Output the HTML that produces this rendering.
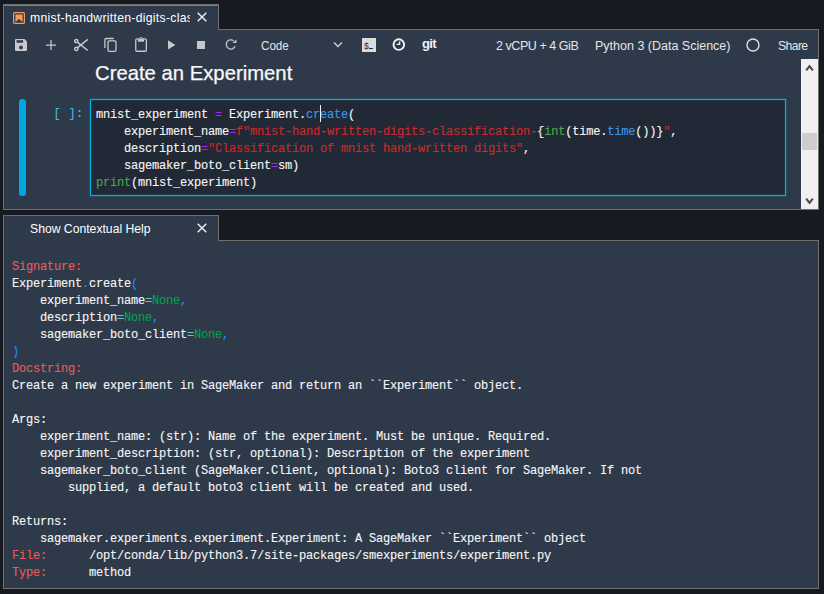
<!DOCTYPE html>
<html><head><meta charset="utf-8">
<style>
*{margin:0;padding:0;box-sizing:border-box}
html,body{width:824px;height:594px;overflow:hidden;background:#171a21}
body{position:relative;font-family:"Liberation Sans",sans-serif;color:#e8e8e8}
.abs{position:absolute}
.panelbg{background:#2e3949}
.bd{border:1px solid #6e6e6c}
.tab{position:absolute;background:#2e3949;border:1px solid #6e6e6c;border-bottom:none}
.tablabel{position:absolute;font-size:12.2px;white-space:nowrap;overflow:hidden;color:#ffffff}
.x{position:absolute;width:10px;height:10px}
.mono{font-family:"Liberation Mono",monospace;font-size:12px;letter-spacing:-0.2px;white-space:pre;line-height:17px;-webkit-text-stroke:0.12px currentColor}
.ui{font-size:12.2px;color:#e6e6e6;white-space:nowrap}
.op{color:#aa22ff}.str{color:#cc2a2a}.prop{color:#3f96ea}.kw{color:#4aa64a}
.ar{color:#e75c58}.ab{color:#208ffb}.ag{color:#00a250}.ac{color:#60c6c8}
</style></head><body>

<!-- Panel 1 -->
<div class="abs panelbg bd" style="left:3px;top:29px;width:816px;height:181px"></div>
<!-- Tab 1 -->
<div class="tab" style="left:3px;top:4px;width:216px;height:26px">
  <div class="abs" style="left:0;top:0;width:214px;height:1px;background:#00a8e1"></div>
</div>
<!-- tab icon -->
<svg class="abs" style="left:13px;top:12px" width="12" height="12" viewBox="0 0 12 12">
  <rect x="0.6" y="0.6" width="10.8" height="10.8" rx="1" fill="none" stroke="#f39c5a" stroke-width="1.2"/>
  <path d="M2.4 2.4h7.2v7.6L6 6.9L2.4 10z" fill="#f39c5a"/>
</svg>
<div class="tablabel" style="left:30px;top:9px;width:160px;height:18px;line-height:18px;letter-spacing:0.3px">mnist-handwritten-digits-classification.ipynb</div>
<svg class="x" style="left:197px;top:12px" viewBox="0 0 10 10"><path d="M0.7 0.7L9.3 9.3M9.3 0.7L0.7 9.3" stroke="#f0f0f0" stroke-width="1.4"/></svg>

<!-- Toolbar -->
<!-- save -->
<svg class="abs" style="left:15px;top:39px" width="12" height="12" viewBox="0 0 12 12">
  <path d="M0 1a1 1 0 0 1 1-1h8.5L12 2.5V11a1 1 0 0 1-1 1H1a1 1 0 0 1-1-1z" fill="#c8c8c8"/>
  <rect x="1.5" y="1.2" width="6.6" height="2.5" fill="#2e3949"/>
  <circle cx="6" cy="8.4" r="1.9" fill="#2e3949"/>
</svg>
<!-- plus -->
<svg class="abs" style="left:46px;top:40px" width="10" height="10" viewBox="0 0 10 10"><path d="M5 0v10M0 5h10" stroke="#c8c8c8" stroke-width="1.25"/></svg>
<!-- cut -->
<svg class="abs" style="left:74px;top:38px" width="15" height="14" viewBox="0 0 15 14">
  <circle cx="2.3" cy="3" r="1.6" fill="none" stroke="#c8c8c8" stroke-width="1.5"/>
  <circle cx="2.3" cy="10.9" r="1.6" fill="none" stroke="#c8c8c8" stroke-width="1.5"/>
  <path d="M3.6 4.3L13.8 12.5M3.6 9.6L13.8 1.4" stroke="#c8c8c8" stroke-width="1.5"/>
</svg>
<!-- copy+paste -->
<svg class="abs" style="left:100px;top:34px" width="50" height="22" viewBox="0 0 50 22">
  <path d="M4.9 14V5.7Q4.9 4.5 6.1 4.5H13.7" fill="none" stroke="#c8c8c8" stroke-width="1.3"/>
  <rect x="8" y="6.9" width="8" height="10.4" rx="1.2" fill="none" stroke="#c8c8c8" stroke-width="1.3"/>
  <rect x="35.75" y="4.9" width="10.6" height="12.35" rx="1.3" fill="none" stroke="#c8c8c8" stroke-width="1.3"/>
  <path d="M38 5.2h6v2.5h-6z" fill="#c8c8c8"/>
  <circle cx="41" cy="4.6" r="1.6" fill="#c8c8c8"/>
  <circle cx="41" cy="4.4" r="0.55" fill="#2e3949"/>
</svg>
<!-- run -->
<svg class="abs" style="left:168px;top:40px" width="8" height="10" viewBox="0 0 8 10"><path d="M0 0.2L7.4 4.9L0 9.6z" fill="#c8c8c8"/></svg>
<!-- stop -->
<div class="abs" style="left:197px;top:41px;width:8px;height:8px;background:#c8c8c8"></div>
<!-- restart -->
<svg class="abs" style="left:225px;top:38px" width="13" height="13" viewBox="0 0 13 13">
  <path d="M10.07 8.34A4.6 4.6 0 1 1 8.6 2.7" fill="none" stroke="#c8c8c8" stroke-width="1.3"/>
  <path d="M7.4 5.1L11.5 1.6L11.5 5.1z" fill="#c8c8c8"/>
</svg>
<div class="abs ui" style="left:261px;top:37.5px;font-size:13.5px;transform:scaleX(0.86);transform-origin:0 0">Code</div>
<svg class="abs" style="left:333px;top:41px" width="10" height="7" viewBox="0 0 10 7"><path d="M1 1.5L5 5.5L9 1.5" fill="none" stroke="#d0d0d0" stroke-width="1.4"/></svg>
<!-- terminal -->
<div class="abs" style="left:362px;top:38px;width:14px;height:14px;background:#dcdcdc"></div>
<div class="abs" style="left:364px;top:40.5px;font-size:8.5px;color:#2a2a2a;font-family:'Liberation Sans',sans-serif;line-height:10px">$</div>
<div class="abs" style="left:369px;top:48px;width:4px;height:1px;background:#2a2a2a"></div>
<!-- clock -->
<svg class="abs" style="left:392px;top:37.5px" width="14" height="14" viewBox="0 0 14 14">
  <circle cx="6.8" cy="6.6" r="5.3" fill="none" stroke="#f4f4f4" stroke-width="1.9"/>
  <path d="M7.6 3.4V6.4H4.6" fill="none" stroke="#f4f4f4" stroke-width="1.4"/>
</svg>
<div class="abs" style="left:422px;top:35.5px;font-size:13px;font-weight:bold;color:#f4f4f4;letter-spacing:-0.6px">git</div>
<div class="abs ui" style="left:496px;top:39px;font-size:12.5px;letter-spacing:-0.45px">2 vCPU + 4 GiB</div>
<div class="abs ui" style="left:595px;top:39px;font-size:12.5px">Python 3 (Data Science)</div>
<svg class="abs" style="left:746px;top:38px" width="14" height="14" viewBox="0 0 14 14"><circle cx="7" cy="7" r="6" fill="none" stroke="#e0e0e0" stroke-width="1.4"/></svg>
<div class="abs ui" style="left:778px;top:39px;font-size:12.2px;letter-spacing:-0.6px">Share</div>

<!-- notebook content -->
<div class="abs ui" style="left:95px;top:62px;font-size:20.3px;color:#f8f8f8;-webkit-text-stroke:0.25px #f8f8f8">Create an Experiment</div>
<div class="abs" style="left:19px;top:99px;width:7px;height:97px;background:#00a8e1;border-radius:3px"></div>
<div class="abs mono" style="left:53.5px;top:106px;color:#3bbde0;letter-spacing:0.3px">[ ]:</div>
<div class="abs" style="left:90px;top:99px;width:696px;height:97px;border:1px solid #00aee8;background:#202935;box-shadow:0 0 2px rgba(0,174,232,0.55),inset 0 0 2px rgba(0,174,232,0.45)"></div>
<div class="abs mono" style="left:96px;top:107px;color:#f6f6f6">mnist_experiment <span class="op">=</span> Experiment.<span class="prop">create</span>(
    experiment_name<span class="op">=</span><span class="str">f"mnist-hand-written-digits-classification-</span>{<span class="kw">int</span>(time.<span class="prop">time</span>())}<span class="str">"</span>,
    description<span class="op">=</span><span class="str">"Classification of mnist hand-written digits"</span>,
    sagemaker_boto_client<span class="op">=</span>sm)
<span class="kw">print</span>(mnist_experiment)</div>
<div class="abs" style="left:320px;top:105px;width:1px;height:17px;background:#f0f0f0"></div>

<!-- scrollbar -->
<div class="abs" style="left:801px;top:59px;width:17px;height:150px;background:#f0f0f0"></div>
<div class="abs" style="left:802px;top:133px;width:15px;height:17px;background:#cdcdcd"></div>
<svg class="abs" style="left:805px;top:64px" width="9" height="8" viewBox="0 0 9 8"><path d="M1.2 6.4L4.5 2.2L7.8 6.4" fill="none" stroke="#4a4a4a" stroke-width="2.1"/></svg>
<svg class="abs" style="left:805px;top:197px" width="9" height="8" viewBox="0 0 9 8"><path d="M1.2 1.6L4.5 5.8L7.8 1.6" fill="none" stroke="#4a4a4a" stroke-width="2.1"/></svg>

<!-- Panel 2 -->
<div class="abs panelbg bd" style="left:3px;top:240px;width:816px;height:349px"></div>
<div class="tab" style="left:3px;top:215px;width:216px;height:26px"></div>
<div class="tablabel" style="left:30px;top:220px;width:165px;height:18px;line-height:18px">Show Contextual Help</div>
<svg class="x" style="left:197px;top:223px" viewBox="0 0 10 10"><path d="M0.7 0.7L9.3 9.3M9.3 0.7L0.7 9.3" stroke="#f0f0f0" stroke-width="1.4"/></svg>

<div class="abs mono" style="left:12px;top:259px;color:#f6f6f6"><span class="ar">Signature:</span>
Experiment<span class="ab">.</span>create<span class="ab">(</span>
    experiment_name<span class="ac">=</span><span class="ag">None</span><span class="ab">,</span>
    description<span class="ac">=</span><span class="ag">None</span><span class="ab">,</span>
    sagemaker_boto_client<span class="ac">=</span><span class="ag">None</span><span class="ab">,</span>
<span class="ab">)</span>
<span class="ar">Docstring:</span>
Create a new experiment in SageMaker and return an ``Experiment`` object.

Args:
    experiment_name: (str): Name of the experiment. Must be unique. Required.
    experiment_description: (str, optional): Description of the experiment
    sagemaker_boto_client (SageMaker.Client, optional): Boto3 client for SageMaker. If not
        supplied, a default boto3 client will be created and used.

Returns:
    sagemaker.experiments.experiment.Experiment: A SageMaker ``Experiment`` object
<span class="ar">File:</span>      /opt/conda/lib/python3.7/site-packages/smexperiments/experiment.py
<span class="ar">Type:</span>      method</div>

</body></html>
